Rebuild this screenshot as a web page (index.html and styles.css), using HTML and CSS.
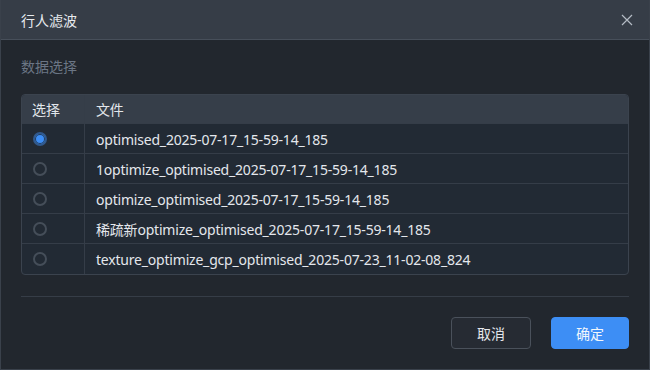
FILE: index.html
```html
<!DOCTYPE html>
<html lang="zh">
<head>
  <meta charset="UTF-8" />
  <meta name="viewport" content="width=device-width, initial-scale=1.0" />
  <title>行人滤波</title>
  <link rel="stylesheet" href="styles.css">
</head>
<body>
  <div class="dialog">
    <div class="dialog-header">
      <span class="dialog-title">行人滤波</span>
      <button class="close" aria-label="关闭">
        <svg width="12" height="12" viewBox="0 0 12 12">
          <path d="M1 1L11 11M11 1L1 11" stroke="#b4bbc4" stroke-width="1.2" fill="none" />
        </svg>
      </button>
    </div>

    <div class="dialog-body">
      <div class="section-label">数据选择</div>

      <div class="file-table">
        <div class="row head">
          <div class="cell pick">选择</div>
          <div class="cell name">文件</div>
        </div>
        <div class="row">
          <div class="cell pick"><span class="radio checked"></span></div>
          <div class="cell name">optimised_2025-07-17_15-59-14_185</div>
        </div>
        <div class="row">
          <div class="cell pick"><span class="radio"></span></div>
          <div class="cell name">1optimize_optimised_2025-07-17_15-59-14_185</div>
        </div>
        <div class="row">
          <div class="cell pick"><span class="radio"></span></div>
          <div class="cell name">optimize_optimised_2025-07-17_15-59-14_185</div>
        </div>
        <div class="row">
          <div class="cell pick"><span class="radio"></span></div>
          <div class="cell name">稀疏新optimize_optimised_2025-07-17_15-59-14_185</div>
        </div>
        <div class="row">
          <div class="cell pick"><span class="radio"></span></div>
          <div class="cell name">texture_optimize_gcp_optimised_2025-07-23_11-02-08_824</div>
        </div>
      </div>

      <div class="divider"></div>

      <div class="actions">
        <button class="btn">取消</button>
        <button class="btn primary">确定</button>
      </div>
    </div>
  </div>
</body>
</html>
```

FILE: styles.css
```css
body {
  margin: 0;
  background-color: #22272e;
  font-family: "Noto Sans", "Noto Sans CJK SC", sans-serif;
  font-size: 14px;
  color: #e4e7ec;
}

.dialog {
  width: 650px;
  height: 370px;
  box-sizing: border-box;
  border: 1px solid #3a414b;
  border-top: none;
  background-color: #22272e;
}

.dialog-header {
  height: 39px;
  display: flex;
  align-items: center;
  justify-content: space-between;
  padding: 0 14px 0 20px;
  background-color: #363d47;
  border-bottom: 1px solid #474f5a;
}

.dialog-title {
  color: #e8ebef;
}

.close {
  background: none;
  border: none;
  padding: 0;
  width: 16px;
  height: 16px;
  display: flex;
  align-items: center;
  justify-content: center;
  cursor: pointer;
}

.dialog-body {
  padding: 17px 20px 20px;
}

.section-label {
  line-height: 20px;
  color: #6b7685;
  margin-bottom: 17px;
}

.file-table {
  border: 1px solid #3b434e;
  border-radius: 4px;
  overflow: hidden;
  background-color: #222a34;
}

.row {
  display: flex;
  height: 30px;
  box-sizing: border-box;
  border-bottom: 1px solid #353d48;
}

.row:first-child {
  height: 29px;
}

.row:last-child {
  border-bottom: none;
}

.row.head {
  background-color: #363e49;
  color: #e2e6eb;
}

.cell {
  display: flex;
  align-items: center;
}

.cell.pick {
  width: 63px;
  padding-left: 10px;
  box-sizing: border-box;
  border-right: 1px solid #353d48;
}

.cell.name {
  padding-left: 11px;
  white-space: nowrap;
  letter-spacing: -0.2px;
}

.row:not(.head) .cell.name {
  padding-top: 1px;
}

.radio {
  width: 14px;
  height: 14px;
  box-sizing: border-box;
  border: 2px solid #454e59;
  border-radius: 50%;
  margin-left: 1px;
}

.radio.checked {
  border: 2px solid #31598c;
  background-color: #3d8ef5;
  box-shadow: inset 0 0 0 1px #1f3b5e;
}

.divider {
  height: 1px;
  background-color: #363d47;
  margin-top: 21px;
}

.actions {
  display: flex;
  justify-content: flex-end;
  gap: 20px;
  margin-top: 20px;
}

.btn {
  width: 80px;
  height: 32px;
  font-family: inherit;
  font-size: 14px;
  color: #e4e7ec;
  background-color: #262b33;
  border: 1px solid #4a515b;
  border-radius: 4px;
  cursor: pointer;
}

.btn.primary {
  width: 78px;
  background-color: #3d8ef5;
  border-color: #3d8ef5;
  color: #f2f6fc;
}
```
